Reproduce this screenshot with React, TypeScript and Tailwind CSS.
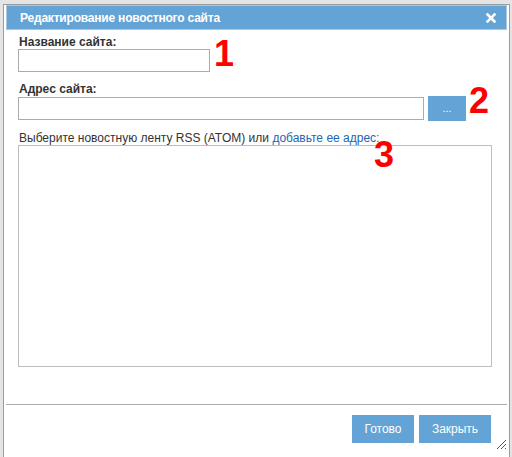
import { useState } from 'react';

function CloseIcon() {
  return (
    <svg width="10" height="10" viewBox="0 0 10 10" className="block">
      <path d="M1.5 1.5 L8.5 8.5 M8.5 1.5 L1.5 8.5" stroke="#fff" strokeWidth="2.6" strokeLinecap="square" />
    </svg>
  );
}

function ResizeGrip() {
  return (
    <svg width="12" height="12" viewBox="0 0 12 12" className="block">
      <path d="M11 2 L2 11 M11 6 L6 11 M11 10 L10 11" stroke="#555" strokeWidth="1" />
    </svg>
  );
}

export default function App() {
  const [name, setName] = useState('');
  const [url, setUrl] = useState('');

  return (
    <div className="relative h-[457px] w-[512px] overflow-hidden bg-[#e4e4e4] font-['Liberation_Sans',Arial,sans-serif] text-[12px] text-[#333]">
      <div className="relative ml-[3px] mt-[4px] h-[470px] w-[507px] border border-[#9c9c9c] bg-white px-[2px]">
        {/* Title bar */}
        <div className="flex h-[25px] items-center justify-between border border-[#a9c6de] bg-[#63a3d5] pl-[13px] pr-[9px]">
          <span className="text-[12px] font-bold tracking-[-0.2px] text-white">Редактирование новостного сайта</span>
          <button className="flex h-[12px] w-[12px] items-center justify-center">
            <CloseIcon />
          </button>
        </div>

        {/* Body */}
        <div className="px-[12px] pt-[6px]">
          <label className="block h-[13px] pl-px font-bold leading-[13px]">Название сайта:</label>
          <input
            value={name}
            onChange={(e) => setName(e.target.value)}
            className="block h-[23px] w-[192px] border border-[#ababab] bg-white px-1 outline-none"
          />

          <label className="mt-[11px] block h-[13px] pl-px font-bold leading-[13px]">Адрес сайта:</label>
          <div className="flex items-center gap-[4px]">
            <input
              value={url}
              onChange={(e) => setUrl(e.target.value)}
              className="block h-[23px] w-[406px] border border-[#ababab] bg-white px-1 outline-none"
            />
            <button className="h-[25px] w-[38px] bg-[#63a3d5] text-[11px] leading-none text-white">...</button>
          </div>

          <p className="mt-[11px] h-[13px] pl-px leading-[13px]">
            Выберите новостную ленту RSS (ATOM) или{' '}
            <a className="text-[#1e65b3]">добавьте ее адрес:</a>
          </p>
          <div className="h-[222px] w-[474px] border border-[#bdbdbd] bg-white" />
        </div>

        {/* Footer */}
        <div className="mt-[37px] border-t border-[#ababab]" />
        <div className="flex justify-end gap-[5px] pr-[16px] pt-[10px]">
          <button className="h-[28px] w-[62px] bg-[#63a3d5] text-[12px] text-white">Готово</button>
          <button className="h-[28px] w-[72px] bg-[#63a3d5] text-[12px] text-white">Закрыть</button>
        </div>
        <div className="absolute left-[491px] top-[433px]">
          <ResizeGrip />
        </div>
      </div>

      {/* Red annotation numbers */}
      <span className="absolute left-[214px] top-[36px] text-[36px] font-bold leading-[36px] text-[#ff0000]">1</span>
      <span className="absolute left-[469px] top-[83px] text-[36px] font-bold leading-[36px] text-[#ff0000]">2</span>
      <span className="absolute left-[374px] top-[137px] text-[36px] font-bold leading-[36px] text-[#ff0000]">3</span>
    </div>
  );
}
